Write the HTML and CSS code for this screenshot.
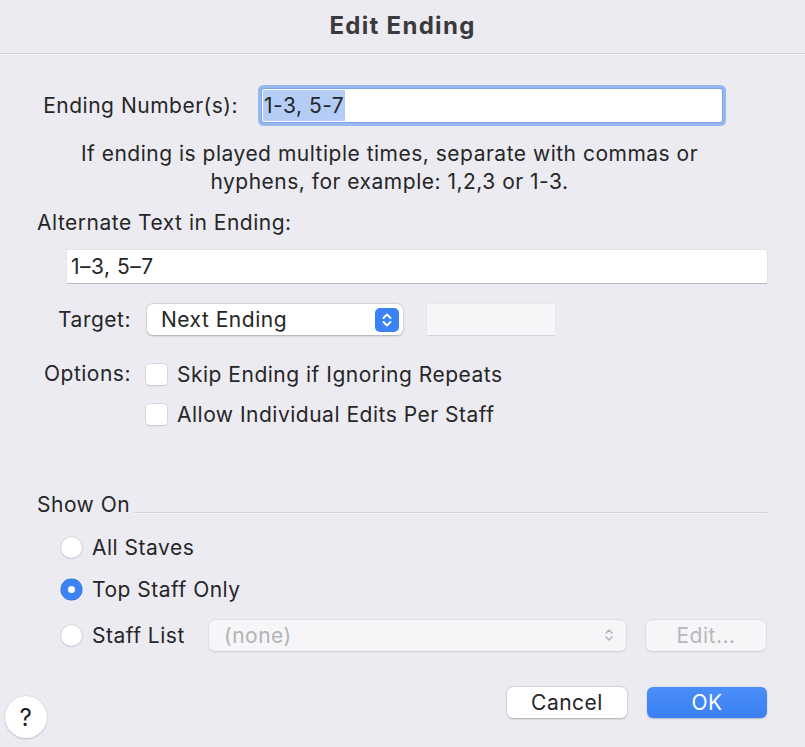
FILE: index.html
```html
<!DOCTYPE html>
<html>
<head>
<meta charset="utf-8">
<link rel="stylesheet" href="styles.css">
</head>
<body>
<div class="window">
  <header class="titlebar"><h1 class="title">Edit Ending</h1></header>
  <main class="content">
    <div class="row row-number">
      <span class="lbl lbl-num">Ending Number(s):</span>
      <div class="field field-focus"><span class="sel">1-3, 5-7</span></div>
    </div>
    <p class="hint">If ending is played multiple times, separate with commas or<br>hyphens, for example: 1,2,3 or 1-3.</p>
    <div class="lbl-alt">Alternate Text in Ending:</div>
    <div class="field field-alt">1–3, 5–7</div>
    <div class="row row-target">
      <span class="lbl lbl-col">Target:</span>
      <div class="popup popup-target">
        <span>Next Ending</span>
        <span class="stepper">
          <svg width="24" height="24" viewBox="0 0 24 24"><rect x="0" y="0" width="24" height="24" rx="5" fill="#3a82f6"/><path d="M8.5 10 L12 6.5 L15.5 10" fill="none" stroke="#fff" stroke-width="1.8" stroke-linecap="round" stroke-linejoin="round"/><path d="M8.5 14 L12 17.5 L15.5 14" fill="none" stroke="#fff" stroke-width="1.8" stroke-linecap="round" stroke-linejoin="round"/></svg>
        </span>
      </div>
      <div class="blank"></div>
    </div>
    <div class="row row-options">
      <span class="lbl lbl-col">Options:</span>
      <div class="checks">
        <div class="check"><span class="box"></span><span>Skip Ending if Ignoring Repeats</span></div>
        <div class="check"><span class="box"></span><span>Allow Individual Edits Per Staff</span></div>
      </div>
    </div>
    <div class="group-title"><span>Show On</span><span class="rule"></span></div>
    <div class="radios">
      <div class="radio-row r1"><span class="radio"></span><span>All Staves</span></div>
      <div class="radio-row r2"><span class="radio on"></span><span>Top Staff Only</span></div>
      <div class="radio-row r3">
        <span class="radio"></span><span class="staff-lbl">Staff List</span>
        <div class="popup popup-staff">
          <span>(none)</span>
          <svg class="chev" width="10" height="16" viewBox="0 0 10 16"><path d="M2 6 L5 3 L8 6" fill="none" stroke="#b4b4b8" stroke-width="1.5" stroke-linecap="round" stroke-linejoin="round"/><path d="M2 10 L5 13 L8 10" fill="none" stroke="#b4b4b8" stroke-width="1.5" stroke-linecap="round" stroke-linejoin="round"/></svg>
        </div>
        <div class="btn btn-disabled">Edit...</div>
      </div>
    </div>
    <div class="footer">
      <div class="help">?</div>
      <div class="actions">
        <div class="btn btn-cancel">Cancel</div>
        <div class="btn btn-ok">OK</div>
      </div>
    </div>
  </main>
</div>
</body>
</html>
```

FILE: styles.css
```css
* { box-sizing: border-box; }
html, body {
  margin: 0;
  padding: 0;
  background: #ecebf2;
}
body {
  font-family: "Inter", "Roboto", "Liberation Sans", sans-serif;
  font-size: 21px;
  letter-spacing: 0.5px;
  color: #262626;
  width: 805px;
  height: 747px;
  overflow: hidden;
}
.window {
  width: 805px;
  height: 747px;
  background: #ecebf2;
}
.titlebar {
  height: 54px;
  border-bottom: 1px solid #d3d2d9;
  box-shadow: 0 1px 0 #f6f5fa;
  display: flex;
  align-items: center;
  justify-content: center;
}
.title {
  margin: 0;
  margin-top: -3px;
  font-size: 24px;
  font-weight: 700;
  letter-spacing: 1.3px;
  color: #3a3a3c;
}
.content {
  padding: 0 38px 0 37px;
}
.row { display: flex; align-items: center; }
.lbl { text-align: right; }
.row-number { margin-top: 35px; }
.lbl-num { width: 201px; }
.field {
  background: #fff;
  height: 33px;
  line-height: 33px;
  padding-left: 5px;
}
.field-focus {
  margin-left: 24px;
  width: 460px;
  box-shadow: 0 0 0 1px #7ea3e8, 0 0 0 4px #97b7ef;
  border-radius: 2px;
}
.sel {
  background: #b3cdf6;
  display: inline-block;
  line-height: 31px;
  padding: 0 1px;
  margin-left: -4px;
}
.hint {
  margin: 18px 0 0 0;
  padding-right: 25px;
  text-align: center;
  line-height: 28px;
}
.lbl-alt {
  margin-top: 13px;
  line-height: 28px;
}
.field-alt {
  margin: 13px 0 0 30px;
  height: 33px;
  box-shadow: 0 1px 0 #b9b9bf, 0 0 0 0.5px #dcdbe2;
  padding-left: 4px;
}
.row-target { margin-top: 21px; }
.lbl-col { width: 94px; }
.popup {
  display: flex;
  align-items: center;
  justify-content: space-between;
  background: #fff;
  border-radius: 6px;
  height: 31px;
  box-shadow: 0 0.5px 2px rgba(0,0,0,0.25), 0 0 0 0.5px rgba(0,0,0,0.06);
}
.popup-target {
  margin-left: 16px;
  width: 256px;
  padding: 0 4px 0 14px;
}
.stepper { display: flex; }
.blank {
  margin-left: 24px;
  width: 128px;
  height: 31px;
  background: #f6f6f8;
  box-shadow: 0 1px 0 #d6d5db, 0 0 0 0.5px #e2e1e7;
}
.row-options { margin-top: 19px; align-items: flex-start; }
.row-options .lbl-col { line-height: 40px; margin-top: 0; }
.checks { margin-left: 15px; display: flex; flex-direction: column; }
.check { display: flex; align-items: center; height: 40px; }
.box {
  width: 21px;
  height: 21px;
  background: #fff;
  border-radius: 4px;
  box-shadow: 0 0 0 0.5px #c7c6cc, 0 1px 1.5px rgba(0,0,0,0.15);
  margin-right: 10px;
}
.group-title {
  margin-top: 57px;
  display: flex;
  align-items: center;
  line-height: 28px;
}
.rule {
  flex: 1;
  height: 1px;
  background: #d3d2d9;
  margin-left: 4px;
  margin-top: 14px;
  box-shadow: 0 1px 0 #f6f5fa;
}
.radios { margin-top: 14px; padding-left: 24px; }
.radio-row { display: flex; align-items: center; height: 28px; }
.r2 { margin-top: 14px; }
.r3 { margin-top: 16px; height: 32px; }
.radio {
  width: 21px;
  height: 21px;
  border-radius: 50%;
  background: #fff;
  box-shadow: 0 0 0 0.5px #c7c6cc, 0 1px 1.5px rgba(0,0,0,0.15);
  margin-right: 10px;
  position: relative;
}
.radio.on {
  background: #3c84f5;
  box-shadow: 0 0 0 0.5px #2f6fd6;
}
.radio.on::after {
  content: "";
  position: absolute;
  left: 7px;
  top: 7px;
  width: 7px;
  height: 7px;
  border-radius: 50%;
  background: #fff;
}
.staff-lbl { width: 117px; }
.popup-staff {
  width: 417px;
  padding: 0 12px 0 15px;
  background: #f6f6f8;
  color: #b3b3b7;
  box-shadow: 0 0.5px 2px rgba(0,0,0,0.12), 0 0 0 0.5px rgba(0,0,0,0.04);
}
.btn {
  width: 120px;
  height: 31px;
  border-radius: 6px;
  display: flex;
  align-items: center;
  justify-content: center;
}
.btn-disabled {
  margin-left: 20px;
  background: #f6f6f8;
  color: #b7b7bb;
  box-shadow: 0 0.5px 2px rgba(0,0,0,0.12), 0 0 0 0.5px rgba(0,0,0,0.04);
}
.footer {
  margin-top: 36px;
  display: flex;
  justify-content: space-between;
  align-items: flex-start;
  margin-left: -37px;
}
.help {
  width: 42px;
  height: 42px;
  border-radius: 50%;
  background: #fff;
  box-shadow: 0 0 0 0.5px #cfcfd4, 0 1px 2px rgba(0,0,0,0.2);
  margin: 9px 0 0 5px;
  display: flex;
  align-items: center;
  justify-content: center;
  font-size: 24px;
  color: #1e1e1e;
}
.actions { display: flex; gap: 20px; }
.btn-cancel {
  background: #fff;
  box-shadow: 0 0.5px 2px rgba(0,0,0,0.25), 0 0 0 0.5px rgba(0,0,0,0.06);
}
.btn-ok {
  background: linear-gradient(#4a8ef8, #3a80f4);
  color: #fff;
  box-shadow: 0 0.5px 1.5px rgba(0,0,0,0.2);
}
```
